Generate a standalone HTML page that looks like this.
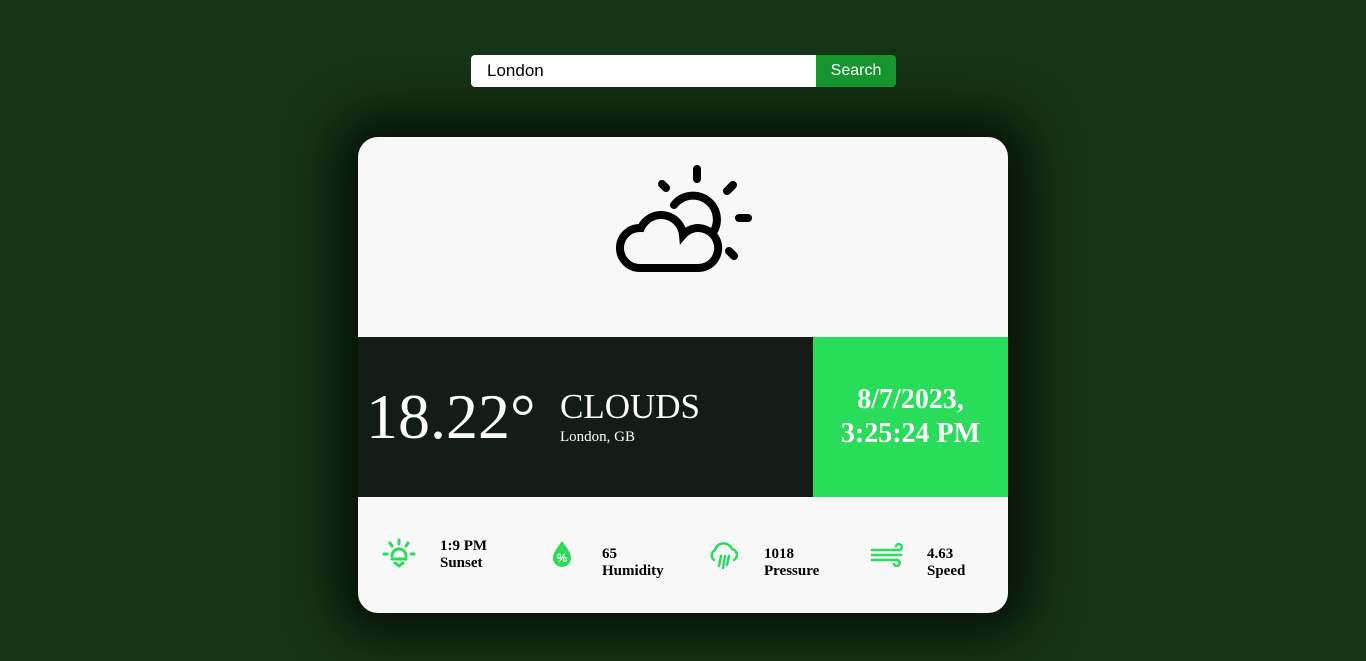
<!DOCTYPE html>
<html><head><style>
body{margin:0;width:1366px;height:661px;background:#153316;font-family:"Liberation Serif",serif;overflow:hidden;position:relative}
.search{position:absolute;left:471px;top:55px;width:425px;height:32px;z-index:5}
.search .in{position:absolute;left:0;top:0;width:345px;height:32px;border-radius:4px 0 0 4px;background:#fff;box-sizing:border-box;padding-left:16px;font:17px/32px "Liberation Sans",sans-serif;color:#000}
.search .bt{position:absolute;left:345px;top:0;width:80px;height:32px;border-radius:0 4px 4px 0;background:#16952f;color:#fff;font:16px/31px "Liberation Sans",sans-serif;text-align:center}
.card{position:absolute;left:358px;top:137px;width:650px;height:476px;background:#f8f8f8;border-radius:20px;overflow:hidden;box-shadow:0 0 50px 20px rgba(0,0,0,.7)}
.mid{position:absolute;left:0;top:200px;width:455px;height:160px;background:#141c16;color:#fff}
.date{position:absolute;left:455px;top:200px;width:195px;height:160px;background:#29dc5a;color:#fff;font-weight:bold;font-size:28px;text-align:center;line-height:34px;display:flex;align-items:center;justify-content:center}
.temp{position:absolute;left:8px;top:42px;font-size:64px;line-height:76px}
.cond{position:absolute;left:202px;top:52px;font-size:35px;line-height:36px}
.loc{position:absolute;left:202px;top:92px;font-size:15px}
.it{position:absolute;top:401px;font-weight:bold;font-size:15px;line-height:17px;color:#000}
svg.i{position:absolute}
</style></head><body>
<div class="search"><div class="in">London</div><div class="bt">Search</div></div>
<div class="card">
<svg width="650" height="200" style="position:absolute;left:0;top:0" fill="none" stroke="#000" stroke-width="8" stroke-linecap="round">
<path d="M339 32V42M304 47L308 51M375 48L369 54M381 81H390M371 114L376 119"/>
<path d="M316 68A22 22 0 1 1 354 97"/>
<path d="M281 131A20 20 0 0 1 283 91A22 22 0 0 1 325 98A20 20 0 1 1 339 131Z" fill="#f8f8f8"/>
</svg>
<div class="mid"><div class="temp">18.22°</div><div class="cond">CLOUDS</div><div class="loc">London, GB</div></div>
<div class="date">8/7/2023,<br>3:25:24 PM</div>
<svg class="i" style="left:24px;top:400px" width="34" height="32" fill="none" stroke="#29dc5a" stroke-width="3" stroke-linecap="round"><path d="M17 3V7M8 6L10 9M26 6L24 9M2 17H5M29 17H32M10 19A7 7 0 0 1 24 19M10 22H24M13 26L17 29L21 26"/></svg>
<div class="it" style="left:82px;top:401px">1:9 PM<br>Sunset</div>
<svg class="i" style="left:192px;top:402px" width="24" height="30"><path d="M12 2C8 8 3 13 3 19A9 9 0 0 0 21 19C21 13 16 8 12 2Z" fill="#29dc5a"/><text x="12" y="23" font-size="12" font-weight="bold" fill="#fff" text-anchor="middle" font-family="Liberation Sans">%</text></svg>
<div class="it" style="left:244px;top:409px">65<br>Humidity</div>
<svg class="i" style="left:350px;top:404px" width="32" height="30" fill="none" stroke="#29dc5a" stroke-width="2.5" stroke-linecap="round"><path d="M6 19A6 6 0 0 1 7 9A9 9 0 0 1 24 8A6 6 0 0 1 26 19M13 15L11 25M17 15L15 27M21 15L19 24"/></svg>
<div class="it" style="left:406px;top:409px">1018<br>Pressure</div>
<svg class="i" style="left:512px;top:404px" width="34" height="26" fill="none" stroke="#29dc5a" stroke-width="2.5" stroke-linecap="round"><path d="M2 9H28A3 3 0 1 0 26 5M2 14H31M2 19H26A3 3 0 1 1 24 23"/></svg>
<div class="it" style="left:569px;top:409px">4.63<br>Speed</div>
</div>
</body></html>
